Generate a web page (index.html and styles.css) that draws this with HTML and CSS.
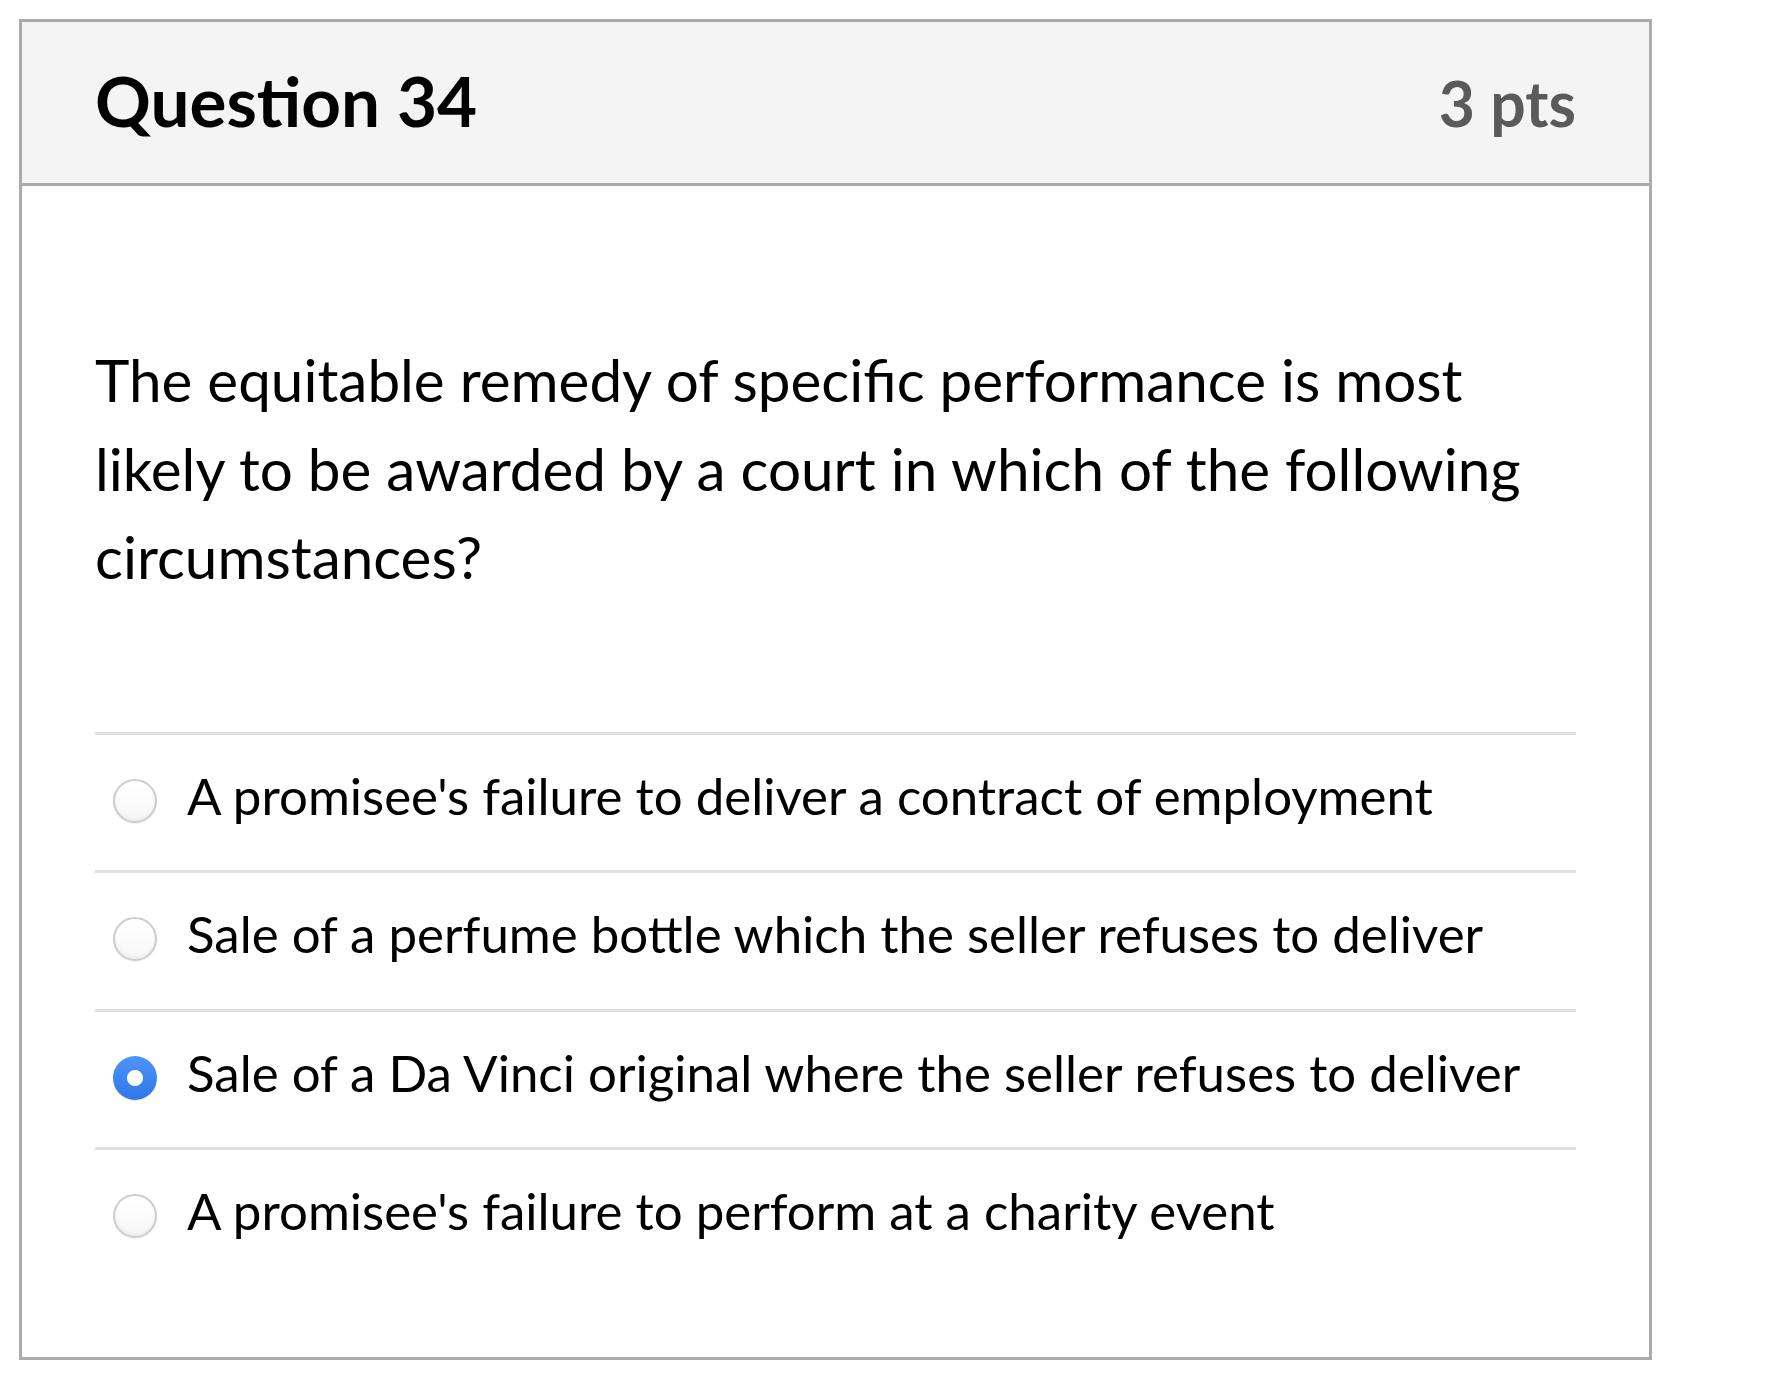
FILE: index.html
```html
<!DOCTYPE html>
<html lang="en">
<head>
<meta charset="utf-8">
<title>Question 34</title>
<link rel="stylesheet" href="styles.css">
</head>
<body>
<div class="question">
  <div class="header">
    <span class="name">Question 34</span>
    <span class="points">3 pts</span>
  </div>
  <div class="content">
    <div class="text">The equitable remedy of specific performance is most likely to be awarded by a court in which of the following circumstances?</div>
    <div class="answers">
      <label class="answer">
        <input type="radio" name="q34" class="radio">
        <span class="label">A promisee's failure to deliver a contract of employment</span>
      </label>
      <label class="answer">
        <input type="radio" name="q34" class="radio">
        <span class="label">Sale of a perfume bottle which the seller refuses to deliver</span>
      </label>
      <label class="answer">
        <input type="radio" name="q34" class="radio" checked>
        <span class="label">Sale of a Da Vinci original where the seller refuses to deliver</span>
      </label>
      <label class="answer">
        <input type="radio" name="q34" class="radio">
        <span class="label">A promisee's failure to perform at a charity event</span>
      </label>
    </div>
  </div>
</div>
</body>
</html>
```

FILE: styles.css
```css
html, body {
  margin: 0;
  padding: 0;
  background: #ffffff;
}

body {
  font-family: "Lato", "Noto Sans", sans-serif;
  color: #000000;
  padding: 19px 0 0 19px;
}

.question {
  width: 1627px;
  border: 3px solid #ababab;
  background: #ffffff;
}

.header {
  display: flex;
  justify-content: space-between;
  align-items: baseline;
  background: #f4f4f4;
  border-bottom: 3px solid #ababab;
  padding: 37px 73px 40px 73px;
  height: 84px;
}

.name {
  font-size: 69.2px;
  font-weight: 700;
  line-height: 84px;
  color: #000000;
}

.points {
  font-size: 62.5px;
  font-weight: 700;
  line-height: 84px;
  color: #5a5a5a;
}

.content {
  padding: 149px 73px 71px 73px;
}

.text {
  font-size: 58.4px;
  line-height: 88.5px;
}

.answers {
  margin-top: 131px;
}

.answer {
  display: flex;
  align-items: flex-start;
  border-top: 3px solid #e1e1e1;
  padding: 23px 18px 36px 18px;
  cursor: pointer;
}

.radio {
  appearance: none;
  -webkit-appearance: none;
  flex: none;
  box-sizing: border-box;
  width: 44px;
  height: 44px;
  margin: 21px 30px 0 0;
  border-radius: 50%;
  border: 2px solid #cdcdcd;
  background: linear-gradient(#ffffff, #f7f7f7);
  box-shadow: inset 0 -2px 3px rgba(0, 0, 0, 0.05), 0 1px 1px rgba(0, 0, 0, 0.06);
}

.radio:checked {
  border: none;
  background:
    radial-gradient(circle, #ffffff 0 7.5px, rgba(255, 255, 255, 0) 8.5px),
    linear-gradient(#4d95f8, #2f76ea);
  box-shadow: 0 1px 1px rgba(0, 0, 0, 0.08);
}

.label {
  font-size: 51px;
  line-height: 76.5px;
}
```
